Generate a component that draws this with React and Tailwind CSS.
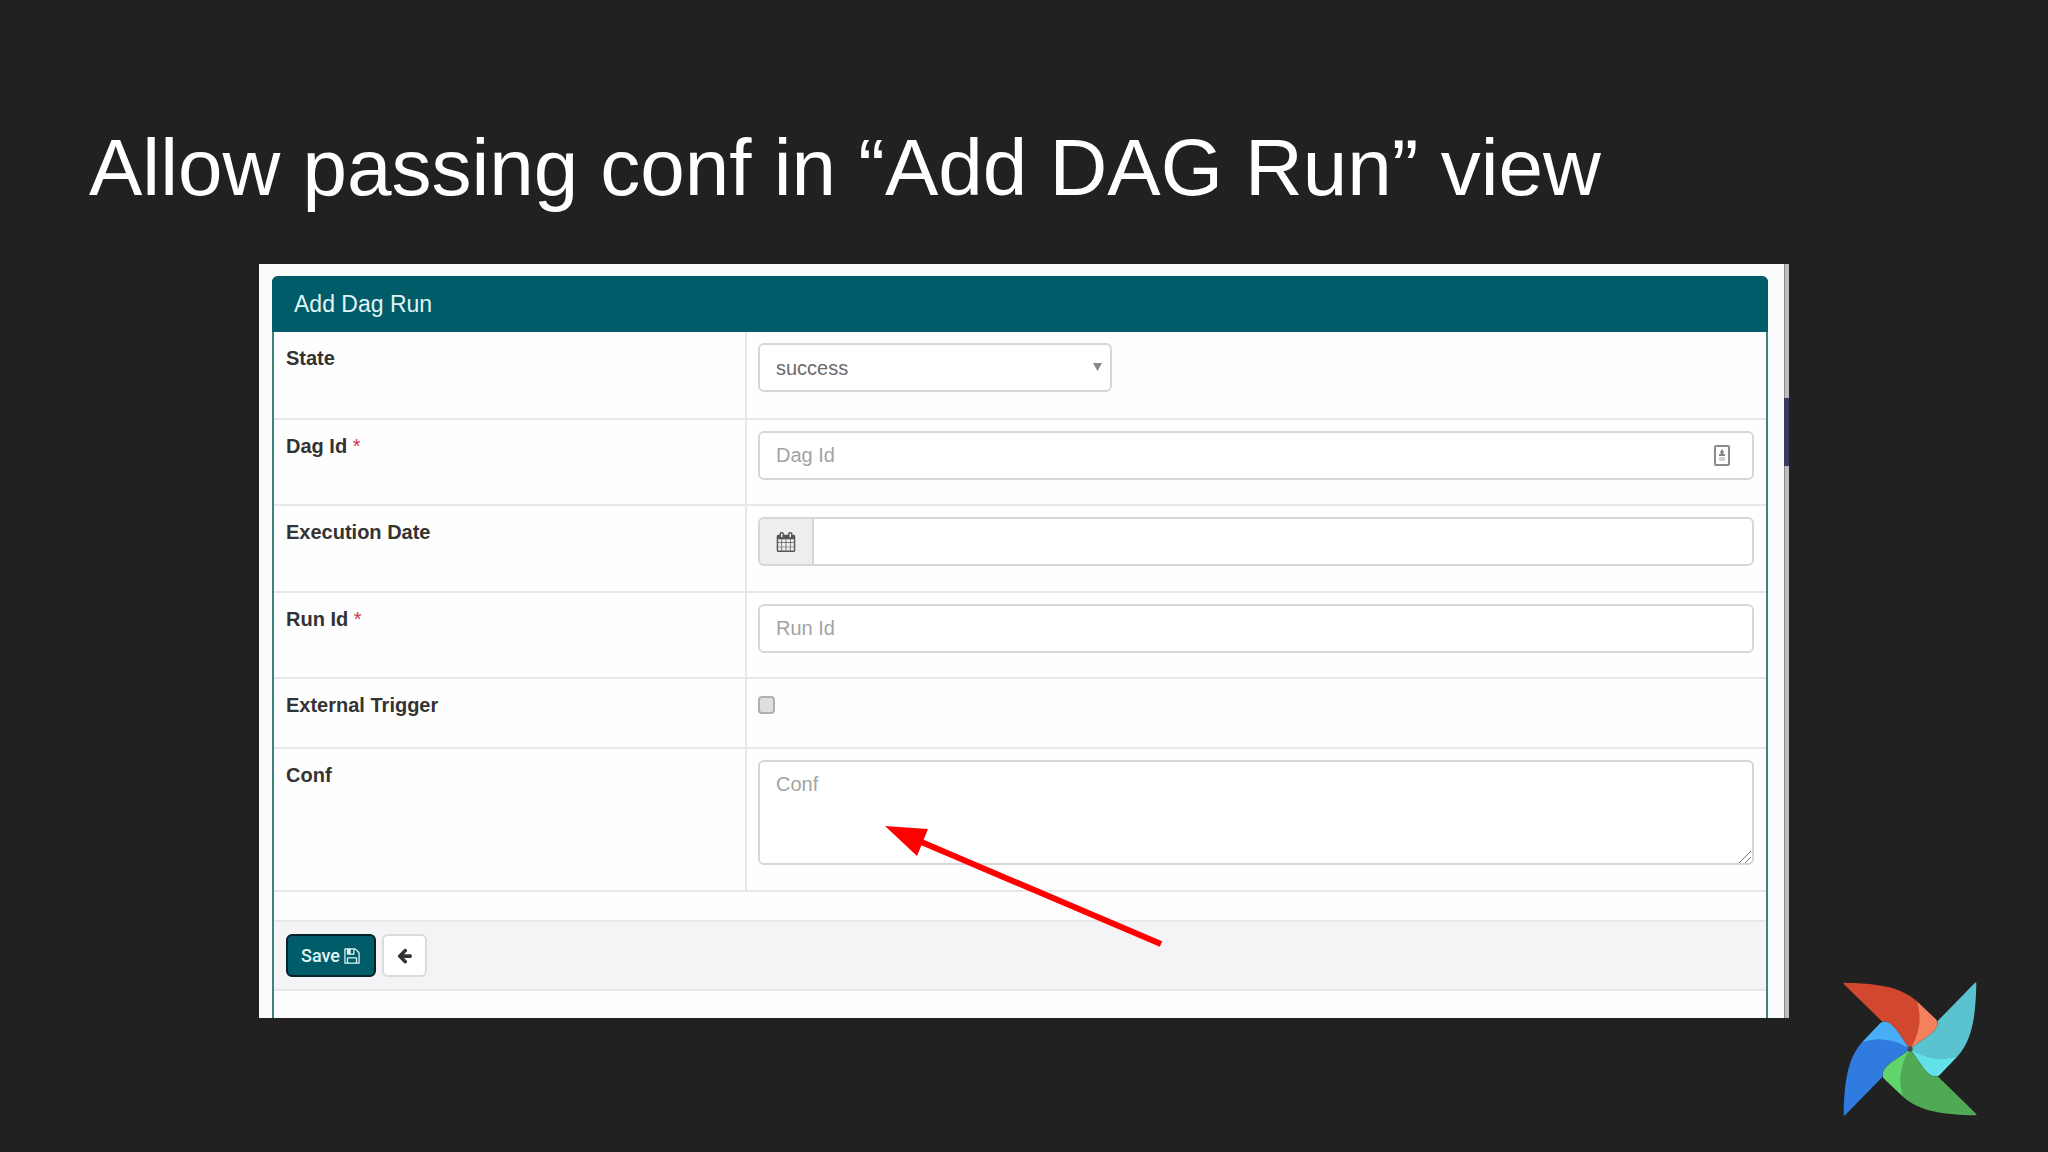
/**
 * Slide: "Add DAG Run" form with the conf field highlighted
 */
const inputClass =
  'block w-full h-[49px] px-4 rounded-md border-2 border-[#d8d5d8] bg-white text-xl text-[#6b6b6b] placeholder:text-[#a3a3a3] placeholder:opacity-100'

const BLADES = [
  { angle: 0, dark: '#d2472f', light: '#f5805e' },
  { angle: 90, dark: '#5ac3cf', light: '#62e1ea' },
  { angle: 180, dark: '#50aa55', light: '#62d46d' },
  { angle: 270, dark: '#2f7be0', light: '#48aef8' },
]

function PinwheelLogo() {
  return (
    <svg viewBox="69 64 402 402" className="w-[134px] h-[134px]" role="img" aria-label="Airflow">
      {BLADES.map(({ angle, dark, light }) => (
        <g key={angle} transform={`rotate(${angle} 270 265)`}>
          <path
            d="M73 66C165 68 240 76 290 121C305 160 305 212 270 265C245 235 230 200 208 187Q197 180 187 183L71 70Q69 66 73 66Z"
            fill={dark}
          />
          <path
            d="M290 121L348 176Q357 188 348 203C335 225 300 240 270 265C303 213 304 162 290 121Z"
            fill={light}
          />
        </g>
      ))}
      <circle cx="270" cy="265" r="8" fill="#4b4b4d" />
    </svg>
  )
}

function CalendarIcon() {
  return (
    <svg viewBox="0 0 1792 1792" className="w-5 h-5" fill="currentColor" aria-hidden="true">
      <path d="M192 1664h288v-288h-288v288zm352 0h320v-288h-320v288zm-352-352h288v-320h-288v320zm352 0h320v-320h-320v320zm-352-384h288v-288h-288v288zm736 736h320v-288h-320v288zm-384-736h320v-288h-320v288zm768 736h288v-288h-288v288zm-384-352h320v-320h-320v320zm-352-864v-288q0-13-9.5-22.5t-22.5-9.5h-64q-13 0-22.5 9.5t-9.5 22.5v288q0 13 9.5 22.5t22.5 9.5h64q13 0 22.5-9.5t9.5-22.5zm736 864h288v-320h-288v320zm-384-384h320v-288h-320v288zm384 0h288v-288h-288v288zm32-480v-288q0-13-9.5-22.5t-22.5-9.5h-64q-13 0-22.5 9.5t-9.5 22.5v288q0 13 9.5 22.5t22.5 9.5h64q13 0 22.5-9.5t9.5-22.5zm384-64v1280q0 52-38 90t-90 38h-1408q-52 0-90-38t-38-90v-1280q0-52 38-90t90-38h128v-96q0-66 47-113t113-47h64q66 0 113 47t47 113v96h384v-96q0-66 47-113t113-47h64q66 0 113 47t47 113v96h128q52 0 90 38t38 90z" />
    </svg>
  )
}

function SaveIcon() {
  return (
    <svg viewBox="0 0 1792 1792" className="w-[18px] h-[18px]" fill="currentColor" aria-hidden="true">
      <path d="M512 1536h768v-384h-768v384zm896 0h128v-896q0-14-10-38.5t-20-34.5l-281-281q-10-10-34-20t-39-10v416q0 40-28 68t-68 28h-576q-40 0-68-28t-28-68v-416h-128v1280h128v-416q0-40 28-68t68-28h832q40 0 68 28t28 68v416zm-384-928v-320q0-13-9.5-22.5t-22.5-9.5h-192q-13 0-22.5 9.5t-9.5 22.5v320q0 13 9.5 22.5t22.5 9.5h192q13 0 22.5-9.5t9.5-22.5zm640 32v928q0 40-28 68t-68 28h-1344q-40 0-68-28t-28-68v-1344q0-40 28-68t68-28h928q40 0 88 20t76 48l280 280q28 28 48 76t20 88z" />
    </svg>
  )
}

function BackIcon() {
  return (
    <svg viewBox="0 0 1792 1792" className="w-[17px] h-[17px]" fill="currentColor" aria-hidden="true">
      <path d="M1664 896v128q0 53-32.5 90.5t-84.5 37.5h-704l293 294q38 36 38 90t-38 90l-75 76q-37 37-90 37-52 0-91-37l-651-652q-37-37-37-90 0-52 37-91l651-650q38-38 91-38 52 0 90 38l75 74q38 38 38 91t-38 91l-293 293h704q52 0 84.5 37.5t32.5 90.5z" />
    </svg>
  )
}

function ContactIcon() {
  return (
    <svg viewBox="0 0 16 21" className="absolute right-6 top-[14px] w-4 h-[21px]" aria-hidden="true">
      <rect x="1" y="1" width="14" height="19" rx="1" fill="#fff" stroke="#8b8b8b" strokeWidth="2" />
      <path d="M8 4l2 3-1 2h2v2H5V9h2L6 7z" fill="#858585" />
      <path d="M5 13h6M5 15h6" stroke="#a5a5a5" />
    </svg>
  )
}

function Row({ id, label, required, height = 'h-[86px]', children }) {
  return (
    <tr className={`${height} border-b-2 border-[#e9e6e8]`}>
      <th scope="row" className="w-[472px] pl-3 pt-3 text-left align-top border-r-2 border-[#e9e6e8]">
        <label htmlFor={id} className="text-xl leading-7 font-bold text-[#333]">
          {label}
          {required && <span className="font-normal text-[#d0314b]"> *</span>}
        </label>
      </th>
      <td className="pl-[11px] pr-3 pt-[11px] align-top">{children}</td>
    </tr>
  )
}

function DagRunForm() {
  return (
    <form className="flex-1 h-[742px] border-x-2 border-[#3f827d] rounded-t-md bg-[#fefefe]">
      <h2 className="-mx-[2px] h-14 pl-[22px] rounded-t-md bg-[#005c69] text-[23px] leading-[56px] text-[#e0f5f5]">
        Add Dag Run
      </h2>
      <table className="w-full table-fixed border-collapse">
        <tbody>
          <Row id="state" label="State" height="h-[87px]">
            <div className="relative w-[354px]">
              <select id="state" className={`${inputClass} appearance-none`}>
                <option>success</option>
              </select>
              <svg viewBox="0 0 9 8" className="absolute right-[10px] top-5 w-[9px] h-2 pointer-events-none">
                <path d="M0 0h9L4.500 8z" fill="#888" />
              </svg>
            </div>
          </Row>
          <Row id="dag-id" label="Dag Id" required>
            <div className="relative">
              <input id="dag-id" type="text" placeholder="Dag Id" className={inputClass} />
              <ContactIcon />
            </div>
          </Row>
          <Row id="execution-date" label="Execution Date" height="h-[87px]">
            <div className="flex">
              <span className="flex w-[54px] shrink-0 items-center justify-center rounded-l-md border-2 border-r-0 border-[#d8d5d8] bg-[#eee] text-[#555]">
                <CalendarIcon />
              </span>
              <input id="execution-date" type="text" className={`${inputClass} rounded-l-none`} />
            </div>
          </Row>
          <Row id="run-id" label="Run Id" required>
            <input id="run-id" type="text" placeholder="Run Id" className={inputClass} />
          </Row>
          <Row id="external-trigger" label="External Trigger" height="h-[70px]">
            <input
              id="external-trigger"
              type="checkbox"
              className="mt-[6px] block h-[18px] w-[17px] appearance-none rounded-sm border-2 border-[#b0aeb0] bg-[#e0dfe0]"
            />
          </Row>
          <Row id="conf" label="Conf" height="h-[143px]">
            <div className="relative">
              <textarea
                id="conf"
                placeholder="Conf"
                className="block h-[105px] w-full resize-none rounded-md border-2 border-[#d8d5d8] bg-white px-4 py-2 text-xl text-[#6b6b6b] placeholder:text-[#a3a3a3] placeholder:opacity-100"
              />
              <svg viewBox="0 0 12 12" className="absolute right-[3px] bottom-[2px] w-3 h-3 pointer-events-none">
                <path d="M0 12L12 0M6 12L12 6" stroke="#777" fill="none" />
              </svg>
              <svg
                viewBox="0 0 280 124"
                className="absolute left-[127px] top-[66px] w-[280px] h-[124px] pointer-events-none"
                aria-hidden="true"
              >
                <path d="M34 15L276 118" stroke="#f00" strokeWidth="6" />
                <path d="M0 0L43 3L32 30Z" fill="#f00" />
              </svg>
            </div>
          </Row>
        </tbody>
      </table>
      <div className="mt-7 flex h-[71px] items-start gap-[6px] border-y-2 border-[#e9e7e9] bg-[#f4f3f5] pl-3 pt-3">
        <button
          type="submit"
          className="flex h-[43px] w-[90px] items-center justify-center gap-[3px] rounded-md border-2 border-[#06222a] bg-[#005c69] font-['Roboto',sans-serif] text-lg font-medium text-[#e0f5f5]"
        >
          Save
          <SaveIcon />
        </button>
        <button
          type="button"
          aria-label="Back"
          className="flex h-[43px] w-[45px] items-center justify-center rounded-md border-2 border-[#dcdadc] bg-white text-[#333]"
        >
          <BackIcon />
        </button>
      </div>
    </form>
  )
}

export default function App() {
  return (
    <main className="flex min-h-screen flex-col bg-[#212121] pt-[122px] font-['Liberation_Sans',Arial,sans-serif]">
      <h1 className="px-[89px] text-[80px] leading-[92px] text-white">Allow passing conf in “Add DAG Run” view</h1>
      <div className="mt-[50px] flex flex-1 pb-9">
        <section className="ml-[259px] flex flex-1 self-start bg-[#fafbfb] pl-[13px] pt-3">
          <DagRunForm />
          {/* page scrollbar */}
          <div className="-mt-3 ml-4 w-[5px] border-l border-[#8a8a8a] bg-[#bdbdbd] pt-[134px]">
            <div className="-ml-px h-[68px] bg-[#3c3a5c]" />
          </div>
        </section>
        <div className="flex w-[259px] items-end justify-end pr-[71px]">
          <PinwheelLogo />
        </div>
      </div>
    </main>
  )
}
